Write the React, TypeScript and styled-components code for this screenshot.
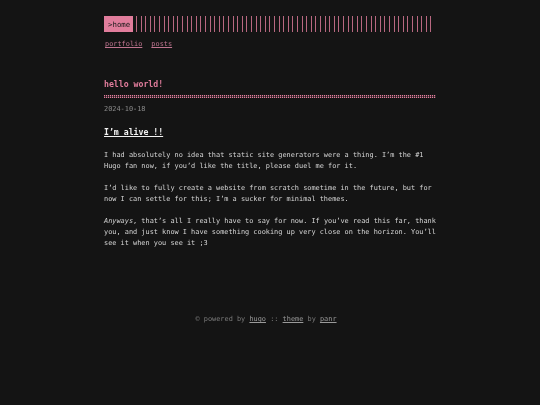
import React, { FC } from "react";
import styled, { createGlobalStyle } from "styled-components";

const accent = "#e17d9c";
const bg = "#141414";

const GlobalStyle = createGlobalStyle`
  html, body {
    margin: 0;
    padding: 0;
    background: ${bg};
  }
  body {
    font-family: "DejaVu Sans Mono", "Liberation Mono", monospace;
    font-size: 6.9px;
    line-height: 11px;
    color: #d6d6d6;
  }
`;

const Page = styled.div`
  max-width: 332px;
  margin: 0 auto;
  padding-top: 16px;
  min-height: 389px;
  will-change: transform;
`;

const Header = styled.header`
  display: flex;
  align-items: stretch;
  gap: 3px;
  height: 16px;
`;

const Logo = styled.a`
  display: flex;
  align-items: center;
  padding: 0 3px 0 4px;
  background: ${accent};
  color: #1a1a1a;
  text-decoration: none;
  font-size: 7.4px;
`;

const Stripes = styled.div`
  flex: 1;
  margin-right: 2px;
  background: repeating-linear-gradient(
    90deg,
    rgba(225, 125, 156, 0.8) 0,
    rgba(225, 125, 156, 0.8) 1px,
    transparent 1px,
    transparent 4.6px
  );
`;

const Menu = styled.nav`
  display: flex;
  gap: 9px;
  margin-top: 7px;
  padding-left: 1px;
`;

const MenuLink = styled.a`
  color: #c07590;
  text-decoration: underline;
`;

const Main = styled.main`
  margin-top: 29px;
`;

const PostTitle = styled.h1`
  position: relative;
  margin: 0;
  font-size: 8.2px;
  line-height: 11px;
  font-weight: bold;
  color: ${accent};
  padding-bottom: 8px;

  &::after {
    content: "";
    position: absolute;
    left: 0;
    right: 0;
    bottom: 0;
    height: 3px;
    background-image: linear-gradient(
        180deg,
        transparent 1px,
        rgba(20, 20, 20, 0.55) 1px,
        rgba(20, 20, 20, 0.55) 2px,
        transparent 2px
      ),
      linear-gradient(90deg, ${accent} 1px, rgba(225, 125, 156, 0.2) 1px);
    background-size: 100% 3px, 2px 3px;
  }
`;

const PostDate = styled.div`
  margin-top: 6px;
  color: #8a8a8a;
`;

const Heading = styled.h2`
  margin: 12px 0 0;
  font-size: 8.2px;
  line-height: 11px;
  font-weight: bold;
  color: #f2f2f2;
  text-decoration: underline;
`;

const Para = styled.p<{ $first?: boolean }>`
  margin: ${(p) => (p.$first ? "12px" : "11px")} 0 0;
`;

const Footer = styled.footer`
  margin-top: 65px;
  margin-right: 8px;
  text-align: center;
  color: #7c7c7c;
`;

const FooterLink = styled.a`
  color: #9a9a9a;
  text-decoration: underline;
`;

const App: FC = () => {
  return (
    <>
      <GlobalStyle />
      <Page>
        <Header>
          <Logo href="#">&gt;home</Logo>
          <Stripes />
        </Header>
        <Menu>
          <MenuLink href="#">portfolio</MenuLink>
          <MenuLink href="#">posts</MenuLink>
        </Menu>
        <Main>
          <PostTitle>hello world!</PostTitle>
          <PostDate>2024-10-18</PostDate>
          <Heading>I’m alive !!</Heading>
          <Para $first>
            I had absolutely no idea that static site generators were a thing. I’m the #1
            Hugo fan now, if you’d like the title, please duel me for it.
          </Para>
          <Para>
            I’d like to fully create a website from scratch sometime in the future, but for
            now I can settle for this; I’m a sucker for minimal themes.
          </Para>
          <Para>
            <em>Anyways</em>, that’s all I really have to say for now. If you’ve read this far, thank
            you, and just know I have something cooking up very close on the horizon. You’ll
            see it when you see it ;3
          </Para>
        </Main>
        <Footer>
          © powered by <FooterLink href="#">hugo</FooterLink> ::{" "}
          <FooterLink href="#">theme</FooterLink> by <FooterLink href="#">panr</FooterLink>
        </Footer>
      </Page>
    </>
  );
};

export default App;
